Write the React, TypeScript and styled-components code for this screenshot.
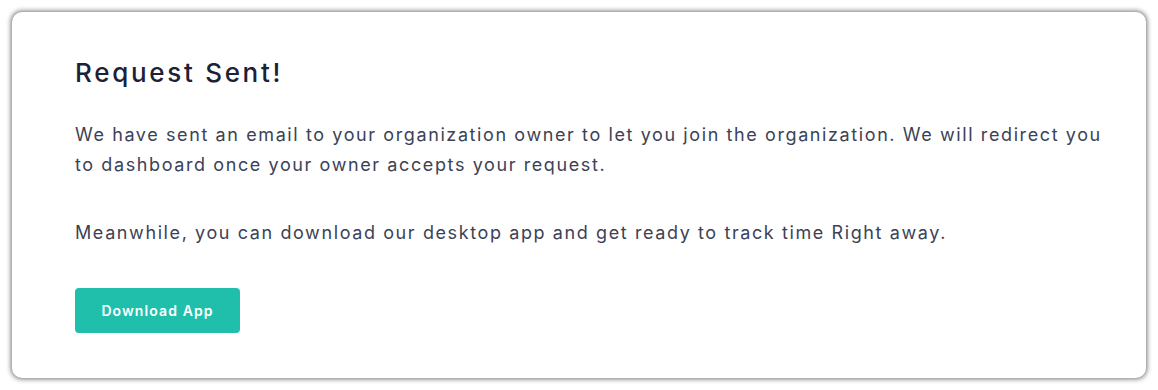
import styled, { createGlobalStyle } from "styled-components";

const GlobalStyle = createGlobalStyle`
    body {
        margin: 0;
        background: #ffffff;
        font-family: Inter, "Liberation Sans", sans-serif;
    }
`

const Page = styled.div`
    padding: 12px;
    box-sizing: border-box;
    width: 1158px;
    height: 390px;
`

const Card = styled.div`
    height: 366px;
    box-sizing: border-box;
    padding: 43px 40px 0 63px;
    background: #ffffff;
    border-radius: 10px;
    box-shadow: 0 0 5px 1px rgba(0, 0, 0, 0.55);
`

const Title = styled.h1`
    margin: 0 0 29px 0;
    font-size: 26px;
    line-height: 36px;
    font-weight: 500;
    color: #1c2136;
    letter-spacing: 2.7px;
`

const Text = styled.p<{ $gap: number }>`
    margin: 0 0 ${props => props.$gap}px 0;
    font-size: 18px;
    line-height: 30px;
    color: #3c4256;
    letter-spacing: 1.6px;
`

const DownloadBtn = styled.button`
    display: block;
    width: 165px;
    height: 45px;
    border: none;
    border-radius: 4px;
    background-color: #20bfac;
    color: white;
    font-family: inherit;
    font-size: 14px;
    font-weight: 600;
    letter-spacing: 1.1px;
    cursor: pointer;
`

const App = () => {
    return (
        <Page>
            <GlobalStyle />
            <Card>
                <Title>Request Sent!</Title>
                <Text $gap={38}>
                    We have sent an email to your organization owner to let you join the organization. We will redirect you to dashboard once your owner accepts your request.
                </Text>
                <Text $gap={40}>
                    Meanwhile, you can download our desktop app and get ready to track time Right away.
                </Text>
                <DownloadBtn>Download App</DownloadBtn>
            </Card>
        </Page>
    );
}

export default App;
